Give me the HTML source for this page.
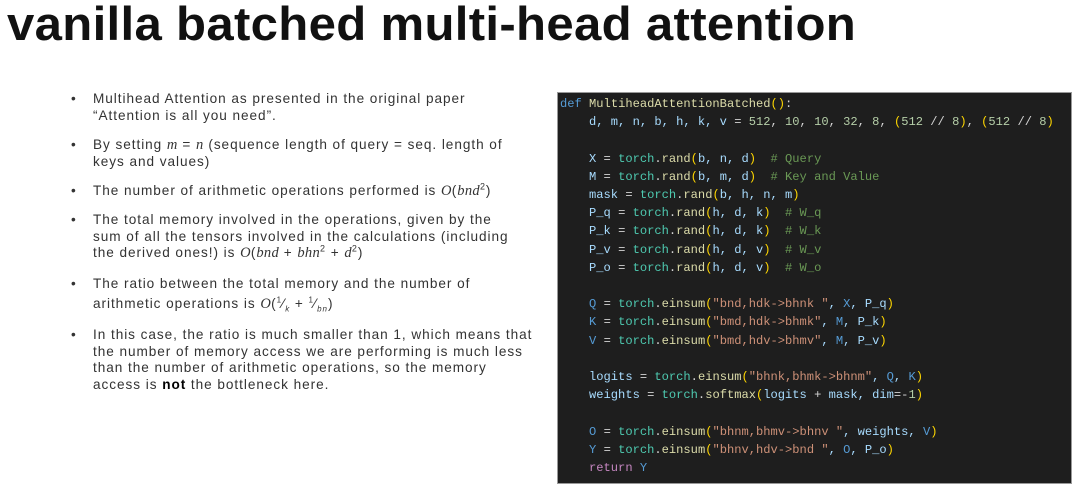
<!DOCTYPE html>
<html><head><meta charset="utf-8"><style>
body{margin:0;width:1072px;height:482px;background:#fff;position:relative;overflow:hidden;font-family:"Liberation Sans",sans-serif}
h1{position:absolute;left:7px;top:-4px;margin:0;font-size:47px;font-weight:bold;color:#111;letter-spacing:0.3px;white-space:nowrap;transform:scaleX(1.045);transform-origin:0 0}
.t{position:absolute;left:93px;font-size:13.6px;color:#333;line-height:16.5px;white-space:nowrap;letter-spacing:0.95px}
.t::before{content:"•";position:absolute;left:-22px;top:0}
sup,sub{line-height:0}
i.m{font-family:"Liberation Serif",serif;font-size:14.5px;letter-spacing:0.3px}
.code{position:absolute;left:557px;top:92px;width:515px;height:392px;background:#1e1e1e;border:1px solid #999;box-sizing:border-box}
pre{margin:0;position:absolute;left:2px;top:2px;font-family:"Liberation Mono",monospace;font-size:12.1px;line-height:18.2px;color:#a8dcff}
.k{color:#569cd6}.f{color:#dcdcaa}.y{color:#ffd700}.g{color:#4ec9b0}.c{color:#6a9955}.s{color:#ce9178}.n{color:#b5cea8}.w{color:#d4d4d4}.r{color:#c586c0}
</style></head><body>
<h1>vanilla batched multi-head attention</h1>
<div class="t" style="top:91px">Multihead Attention as presented in the original paper<br>“Attention is all you need”.</div>
<div class="t" style="top:137px">By setting <i class="m">m</i> = <i class="m">n</i> (sequence length of query = seq. length of<br>keys and values)</div>
<div class="t" style="top:183px">The number of arithmetic operations performed is <i class="m">O</i>(<i class="m">bnd</i><sup style="font-size:9px">2</sup>)</div>
<div class="t" style="top:212px">The total memory involved in the operations, given by the<br>sum of all the tensors involved in the calculations (including<br>the derived ones!) is <i class="m">O</i>(<i class="m">bnd</i> + <i class="m">bhn</i><sup style="font-size:9px">2</sup> + <i class="m">d</i><sup style="font-size:9px">2</sup>)</div>
<div class="t" style="top:274px;line-height:20px">The ratio between the total memory and the number of<br>arithmetic operations is <i class="m">O</i>(<sup style="font-size:8px">1</sup>⁄<sub style="font-size:8px"><i>k</i></sub> + <sup style="font-size:8px">1</sup>⁄<sub style="font-size:8px"><i>bn</i></sub>)</div>
<div class="t" style="top:327px">In this case, the ratio is much smaller than 1, which means that<br>the number of memory access we are performing is much less<br>than the number of arithmetic operations, so the memory<br>access is <b style="color:#000">not</b> the bottleneck here.</div>
<div class="code"><pre><span class="k">def</span> <span class="f">MultiheadAttentionBatched</span><span class="y">()</span><span class="w">:</span>
    d, m, n, b, h, k, v <span class="w">=</span> <span class="n">512</span><span class="w">,</span> <span class="n">10</span><span class="w">,</span> <span class="n">10</span><span class="w">,</span> <span class="n">32</span><span class="w">,</span> <span class="n">8</span><span class="w">,</span> <span class="y">(</span><span class="n">512</span> <span class="w">//</span> <span class="n">8</span><span class="y">)</span><span class="w">,</span> <span class="y">(</span><span class="n">512</span> <span class="w">//</span> <span class="n">8</span><span class="y">)</span>

    X <span class="w">=</span> <span class="g">torch</span><span class="w">.</span><span class="f">rand</span><span class="y">(</span>b, n, d<span class="y">)</span>  <span class="c"># Query</span>
    M <span class="w">=</span> <span class="g">torch</span><span class="w">.</span><span class="f">rand</span><span class="y">(</span>b, m, d<span class="y">)</span>  <span class="c"># Key and Value</span>
    mask <span class="w">=</span> <span class="g">torch</span><span class="w">.</span><span class="f">rand</span><span class="y">(</span>b, h, n, m<span class="y">)</span>
    P_q <span class="w">=</span> <span class="g">torch</span><span class="w">.</span><span class="f">rand</span><span class="y">(</span>h, d, k<span class="y">)</span>  <span class="c"># W_q</span>
    P_k <span class="w">=</span> <span class="g">torch</span><span class="w">.</span><span class="f">rand</span><span class="y">(</span>h, d, k<span class="y">)</span>  <span class="c"># W_k</span>
    P_v <span class="w">=</span> <span class="g">torch</span><span class="w">.</span><span class="f">rand</span><span class="y">(</span>h, d, v<span class="y">)</span>  <span class="c"># W_v</span>
    P_o <span class="w">=</span> <span class="g">torch</span><span class="w">.</span><span class="f">rand</span><span class="y">(</span>h, d, v<span class="y">)</span>  <span class="c"># W_o</span>

    <span class="k">Q</span> <span class="w">=</span> <span class="g">torch</span><span class="w">.</span><span class="f">einsum</span><span class="y">(</span><span class="s">"bnd,hdk-&gt;bhnk "</span>, <span class="k">X</span>, P_q<span class="y">)</span>
    <span class="k">K</span> <span class="w">=</span> <span class="g">torch</span><span class="w">.</span><span class="f">einsum</span><span class="y">(</span><span class="s">"bmd,hdk-&gt;bhmk"</span>, <span class="k">M</span>, P_k<span class="y">)</span>
    <span class="k">V</span> <span class="w">=</span> <span class="g">torch</span><span class="w">.</span><span class="f">einsum</span><span class="y">(</span><span class="s">"bmd,hdv-&gt;bhmv"</span>, <span class="k">M</span>, P_v<span class="y">)</span>

    logits <span class="w">=</span> <span class="g">torch</span><span class="w">.</span><span class="f">einsum</span><span class="y">(</span><span class="s">"bhnk,bhmk-&gt;bhnm"</span>, <span class="k">Q</span>, <span class="k">K</span><span class="y">)</span>
    weights <span class="w">=</span> <span class="g">torch</span><span class="w">.</span><span class="f">softmax</span><span class="y">(</span>logits <span class="w">+</span> mask, dim<span class="w">=-</span><span class="n">1</span><span class="y">)</span>

    <span class="k">O</span> <span class="w">=</span> <span class="g">torch</span><span class="w">.</span><span class="f">einsum</span><span class="y">(</span><span class="s">"bhnm,bhmv-&gt;bhnv "</span>, weights, <span class="k">V</span><span class="y">)</span>
    <span class="k">Y</span> <span class="w">=</span> <span class="g">torch</span><span class="w">.</span><span class="f">einsum</span><span class="y">(</span><span class="s">"bhnv,hdv-&gt;bnd "</span>, <span class="k">O</span>, P_o<span class="y">)</span>
    <span class="r">return</span> <span class="k">Y</span></pre></div>
</body></html>
